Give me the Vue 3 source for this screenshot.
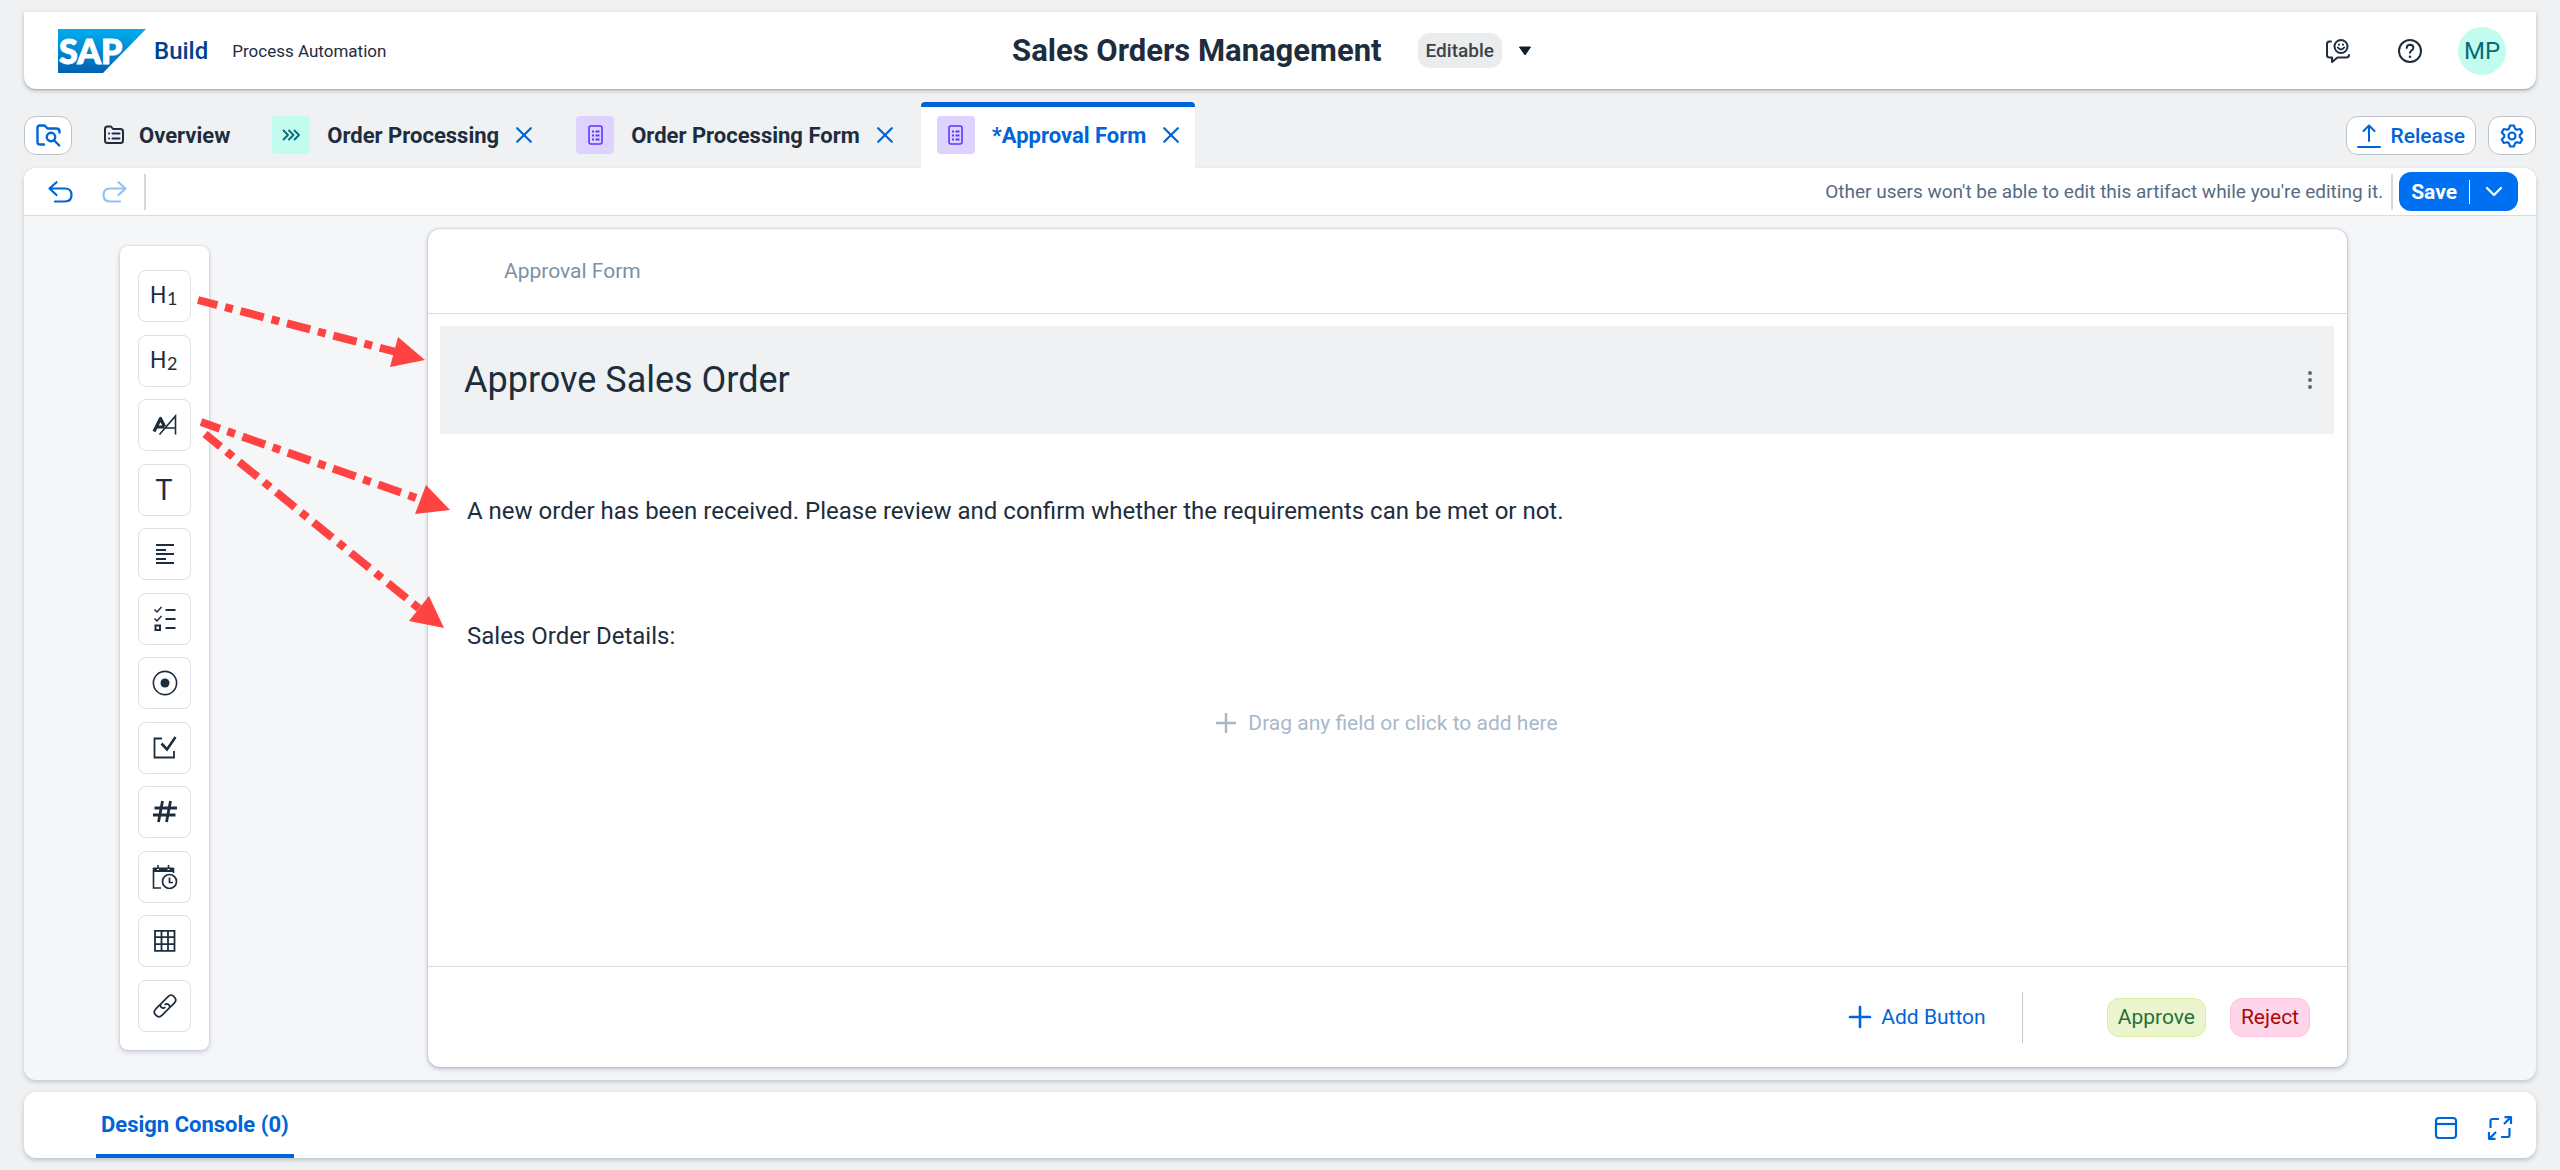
<script setup>
import { ref } from 'vue'

const tabs = [
  { label: 'Order Processing', kind: 'process', active: false },
  { label: 'Order Processing Form', kind: 'document', active: false },
  { label: '*Approval Form', kind: 'document', active: true },
]

const fields = [
  { id: 'h1', label: 'Heading 1' },
  { id: 'h2', label: 'Heading 2' },
  { id: 'paragraph', label: 'Paragraph' },
  { id: 'text', label: 'Text' },
  { id: 'textarea', label: 'Text area' },
  { id: 'checklist', label: 'Choice list' },
  { id: 'radio', label: 'Radio button' },
  { id: 'checkbox', label: 'Checkbox' },
  { id: 'number', label: 'Number' },
  { id: 'date', label: 'Date and time' },
  { id: 'table', label: 'Table' },
  { id: 'link', label: 'Link' },
]

const arrows = [
  { line: 'M198 300 L396 352', head: '425,360 398,337 390,367' },
  { line: 'M201 422 L422 500', head: '450,510 426,485 415,514' },
  { line: 'M205 434 L421 610', head: '444,628 429,596 409,621' },
]

const title = ref('Approve Sales Order')
</script>

<template>
  <div class="page">
    <header class="shell">
      <div class="brand">
        <svg class="logo" viewBox="0 0 88 44" role="img" aria-label="SAP">
          <defs>
            <linearGradient id="logoFill" x1="0" y1="0" x2="0" y2="1">
              <stop offset="0" stop-color="#00aeef" />
              <stop offset="1" stop-color="#0061b0" />
            </linearGradient>
          </defs>
          <polygon points="0,0 88,0 45,44 0,44" fill="url(#logoFill)" />
          <text x="1" y="35" class="logo-text">SAP</text>
        </svg>
        <span class="product">Build</span>
        <span class="area">Process Automation</span>
      </div>
      <div class="project">
        <h1>Sales Orders Management</h1>
        <span class="badge">Editable</span>
        <button class="plain" aria-label="Change version">
          <svg width="14" height="10" viewBox="0 0 14 10"><path d="M1.5 1h11L7 9z" fill="#131e29" stroke="#131e29" stroke-linejoin="round" /></svg>
        </button>
      </div>
      <div class="tools">
        <button class="plain" aria-label="Feedback">
          <svg width="24" height="24" viewBox="0 0 24 24" fill="none" stroke="#1d2d3e" stroke-width="2" stroke-linecap="round" stroke-linejoin="round">
            <path d="M5 2.5H3.500Q1 2.500 1 5v11q0 2.500 2.500 2.500H6V23l5.500-4.500H20q3 0 3-2.500" />
            <circle cx="15" cy="7.500" r="6.500" />
            <path d="M11.800 8.500q3.200 4 6.400 0" />
            <path d="M13 5.600v.1M17 5.600v.1" />
          </svg>
        </button>
        <button class="plain" aria-label="Help">
          <svg width="24" height="24" viewBox="0 0 24 24" fill="none" stroke="#1d2d3e" stroke-width="2" stroke-linecap="round">
            <circle cx="12" cy="12" r="11" />
            <path d="M8.700 9q.2-3.200 3.400-3.200 3.200.1 3.200 3 0 1.600-1.600 2.500-1.700.9-1.700 2.500" />
            <circle cx="12" cy="17.800" r=".6" fill="#1d2d3e" stroke-width="1.400" />
          </svg>
        </button>
        <button class="avatar" aria-label="User profile">MP</button>
      </div>
    </header>

    <nav class="tabs" aria-label="Open artifacts">
      <button class="outlined square" aria-label="Browse project">
        <svg width="25" height="23" viewBox="0 0 25 23" fill="none" stroke="#0064d9" stroke-width="2.400" stroke-linecap="round" stroke-linejoin="round">
          <path d="M8 20.500H4q-2.500 0-2.500-2.500V4Q1.500 1.500 4 1.500h4.500l3 3H20q3.500 0 3.500 3v1" />
          <circle cx="15" cy="13" r="4.200" />
          <path d="M18.200 16.500l5 5" />
        </svg>
      </button>
      <a class="tab overview" href="#overview">
        <svg width="20" height="20" viewBox="0 0 20 20" fill="none" stroke="#1d2d3e" stroke-width="2" stroke-linejoin="round" stroke-linecap="round">
          <path d="M1 4q0-2.500 2.500-2.500h3.500l2 2.500h7.500Q19 4 19 6.500v9q0 2.500-2.500 2.500h-13Q1 18 1 15.500z" />
          <path d="M5 8.500h.1M5 13.500h.1M8.500 8.500h7M8.500 13.500h7" />
        </svg>
        <span>Overview</span>
      </a>
      <div v-for="tab in tabs" :key="tab.label" class="tab" :class="{ active: tab.active }">
        <span class="tile" :class="tab.kind">
          <svg v-if="tab.kind === 'process'" width="18" height="12" viewBox="0 0 18 12" fill="none" stroke="#046c7a" stroke-width="1.800" stroke-linecap="round" stroke-linejoin="round">
            <path d="M1.500 1.500l4.500 4.500-4.500 4.500M7 1.500l4.500 4.500L7 10.500M12.500 1.500L17 6l-4.500 4.500" />
          </svg>
          <svg v-else width="15" height="20" viewBox="0 0 15 20" fill="none" stroke="#5d36ff">
            <rect x="1" y="1" width="13" height="18" rx="2" stroke-width="1.600" />
            <path d="M4 6.500h2M7.500 6.500h4M4 10.500h2M7.500 10.500h4M4 14.500h2M7.500 14.500h4" stroke-width="2" />
          </svg>
        </span>
        <a :href="'#' + tab.kind">{{ tab.label }}</a>
        <button class="plain" :aria-label="'Close ' + tab.label">
          <svg width="16" height="16" viewBox="0 0 16 16" fill="none" stroke="#0064d9" stroke-width="2.200" stroke-linecap="round"><path d="M1.200 1.200l13.600 13.600M14.800 1.200L1.200 14.800" /></svg>
        </button>
      </div>
      <div class="tab-actions">
        <button class="outlined release">
          <svg width="24" height="24" viewBox="0 0 24 24" fill="none" stroke="#0064d9" stroke-width="2" stroke-linecap="round" stroke-linejoin="round"><path d="M12 17V1.500M6.500 7L12 1.500 17.500 7M1 23h22" /></svg>
          <span>Release</span>
        </button>
        <button class="outlined square" aria-label="Settings">
          <svg width="24" height="24" viewBox="0 0 24 24" fill="none" stroke="#0064d9" stroke-width="2.200" stroke-linejoin="round">
            <path d="M10 1.500h4l1 3.300 1.800 1 3.400-.8 2 3.500-2.400 2.500v2l2.400 2.500-2 3.500-3.400-.8-1.800 1-1 3.300h-4l-1-3.300-1.800-1-3.400.8-2-3.500L4.200 13v-2L1.800 8.500l2-3.500 3.400.8 1.800-1z" />
            <circle cx="12" cy="12" r="3.500" />
          </svg>
        </button>
      </div>
    </nav>

    <main class="editor">
      <div class="toolbar">
        <button class="plain" aria-label="Undo">
          <svg width="25" height="22" viewBox="0 0 25 22" fill="none" stroke="#0064d9" stroke-width="2.200" stroke-linecap="round" stroke-linejoin="round"><path d="M8.500 1.200L1.500 7.500l7 6.500M1.500 7.500H17q6.500 0 6.500 6.500T17 20.500H7" /></svg>
        </button>
        <button class="plain faded" aria-label="Redo" disabled>
          <svg width="25" height="22" viewBox="0 0 25 22" fill="none" stroke="#0064d9" stroke-width="2.200" stroke-linecap="round" stroke-linejoin="round"><path d="M16.500 1.200l7 6.300-7 6.500M23.500 7.500H8q-6.500 0-6.500 6.500T8 20.500h10" /></svg>
        </button>
        <span class="divider"></span>
        <p class="lock-note">Other users won't be able to edit this artifact while you're editing it.</p>
        <span class="divider"></span>
        <div class="save">
          <button class="save-main">Save</button>
          <button class="save-more" aria-label="More save options">
            <svg width="18" height="12" viewBox="0 0 18 12" fill="none" stroke="#fff" stroke-width="2.200" stroke-linecap="round" stroke-linejoin="round"><path d="M2 2l7 7 7-7" /></svg>
          </button>
        </div>
      </div>

      <div class="workspace">
        <aside class="palette" aria-label="Form fields">
          <button v-for="field in fields" :key="field.id" class="field" :aria-label="field.label">
            <svg width="26" height="26" viewBox="0 0 26 26" fill="none" stroke="#1d2d3e" stroke-width="2">
              <template v-if="field.id === 'h1'">
                <text x="-2" y="20" class="glyph">H</text><text x="15" y="22" class="glyph small">1</text>
              </template>
              <template v-else-if="field.id === 'h2'">
                <text x="-2" y="20" class="glyph">H</text><text x="15" y="22" class="glyph small">2</text>
              </template>
              <template v-else-if="field.id === 'paragraph'">
                <path d="M2 19.500L8.500 6.500L12.500 14.500M4.500 15h8" stroke-width="3.200" stroke-linejoin="round" />
                <path d="M7.500 22.500L23.500 4V22.500M13.500 16h10" stroke-width="1.600" />
              </template>
              <template v-else-if="field.id === 'text'">
                <text x="12" y="23" class="glyph tall">T</text>
              </template>
              <path v-else-if="field.id === 'textarea'" d="M4 4h18M4 9h10M4 13h18M4 18h10M4 22h18" />
              <template v-else-if="field.id === 'checklist'">
                <path d="M2.500 3.500L5 6l4.500-5M2.500 12.500L5 15l4.500-5" stroke-width="1.500" />
                <rect x="3.500" y="19.500" width="4.500" height="4.500" />
                <path d="M13.500 4h10M13.500 13h10M13.500 22h10" />
              </template>
              <template v-else-if="field.id === 'radio'">
                <circle cx="13" cy="13" r="11.600" stroke-width="1.600" />
                <circle cx="13" cy="13" r="4.500" fill="#1d2d3e" stroke="none" />
              </template>
              <template v-else-if="field.id === 'checkbox'">
                <path d="M10 3.500H2.500v19H22V16" stroke-width="1.800" />
                <path d="M9.500 8.500l5.500 6L23.500 2" stroke-width="2.600" />
              </template>
              <path v-else-if="field.id === 'number'" d="M10.500 2L6.500 23M18.500 2l-4 21M2.500 9H25M1 16h22.500" stroke-width="2.800" />
              <template v-else-if="field.id === 'date'">
                <path d="M1.500 4v20H9M21.500 9V4" stroke-width="1.600" />
                <path d="M1 3.500h20.500v4.500H1z" fill="#1d2d3e" stroke="none" />
                <path d="M6 1v3M16.500 1v3" stroke-width="1.600" />
                <path d="M5 5.500h2M15.500 5.500h2" stroke="#fff" stroke-width="1.200" />
                <circle cx="17.500" cy="17.500" r="7" stroke-width="1.700" />
                <path d="M17.500 13.500v5h3.500" stroke-width="1.700" />
              </template>
              <path v-else-if="field.id === 'table'" d="M3 2.800h19.500v20H3zM9.500 3v20M16 3v20M3 9.200h19.500M3 16.200h19.500" stroke-width="1.800" />
              <g v-else stroke-width="1.700" transform="rotate(-45 13 13)">
                <path d="M9.500 11.500V11q0-2.500 2.500-2.500h9.500q4.500 0 4.500 4.500t-4.500 4.500H15.500" />
                <path d="M16.500 14.500v.5q0 2.500-2.500 2.500H4.500Q0 17.500 0 13t4.500-4.500H10.500" />
                <path d="M9.500 11q0 3 3 3M16.500 15q0-3-3-3" />
              </g>
            </svg>
          </button>
        </aside>

        <section class="form" aria-label="Form canvas">
          <div class="form-name">Approval Form</div>
          <div class="form-body">
            <div class="heading">
              <h2>{{ title }}</h2>
              <button class="plain" aria-label="Heading options">
                <svg width="6" height="20" viewBox="0 0 6 20" fill="#556b82"><circle cx="3" cy="3" r="2" /><circle cx="3" cy="10" r="2" /><circle cx="3" cy="17" r="2" /></svg>
              </button>
            </div>
            <p class="copy intro">A new order has been received. Please review and confirm whether the requirements can be met or not.</p>
            <p class="copy details">Sales Order Details:</p>
            <button class="plain drop">
              <svg width="20" height="20" viewBox="0 0 20 20" stroke="#a9b8c9" stroke-width="2.400"><path d="M10 0v20M0 10h20" /></svg>
              <span>Drag any field or click to add here</span>
            </button>
          </div>
          <footer class="form-footer">
            <button class="plain add">
              <svg width="22" height="22" viewBox="0 0 22 22" stroke="#0064d9" stroke-width="2.600" stroke-linecap="round"><path d="M11 1v20M1 11h20" /></svg>
              <span>Add Button</span>
            </button>
            <span class="rule"></span>
            <button class="decision approve">Approve</button>
            <button class="decision reject">Reject</button>
          </footer>
        </section>
      </div>
    </main>

    <section class="console" aria-label="Console">
      <a class="console-tab" href="#console">Design Console (0)</a>
      <div class="console-actions">
        <button class="plain" aria-label="Dock panel">
          <svg width="24" height="24" viewBox="0 0 24 24" fill="none" stroke="#0064d9" stroke-width="2.200"><rect x="2" y="2" width="20" height="20" rx="3" /><path d="M2 8h20" /></svg>
        </button>
        <button class="plain" aria-label="Full screen">
          <svg width="24" height="24" viewBox="0 0 24 24" fill="none" stroke="#0064d9" stroke-width="2.200" stroke-linejoin="round">
            <path d="M2.500 12V5q0-2 2-2H11M21.500 12v7q0 2-2 2H13M16 8l6.500-6.500M8 16l-6.500 6.500M16.500 1.200H23V8M7.500 22.800H1V16" />
          </svg>
        </button>
      </div>
    </section>

    <svg class="annotations" aria-hidden="true">
      <g v-for="arrow in arrows" :key="arrow.line">
        <path :d="arrow.line" />
        <polygon :points="arrow.head" />
      </g>
    </svg>
  </div>
</template>

<style>
body {
  background: #eff1f2;
}
</style>

<style scoped>
.page {
  position: relative;
  box-sizing: border-box;
  min-height: 100vh;
  padding: 12px 24px;
  display: flex;
  flex-direction: column;
  background: #eff1f2;
  color: #1d2d3e;
  font-family: Roboto, "Open Sans", sans-serif;
  font-size: 21px;
}
.page *,
.page *::before {
  box-sizing: border-box;
}
svg {
  display: block;
  flex: none;
  overflow: visible;
}
button {
  font: inherit;
  margin: 0;
  cursor: pointer;
}
a {
  color: inherit;
  text-decoration: none;
}
h1,
h2,
p {
  margin: 0;
  font-weight: 400;
}
.plain {
  padding: 0;
  border: 0;
  background: none;
  color: inherit;
  display: flex;
  align-items: center;
}

.shell {
  height: 77px;
  padding: 0 30px 0 34px;
  display: grid;
  grid-template-columns: 1fr auto 1fr;
  align-items: center;
  background: #fff;
  border-radius: 0 0 12px 12px;
  box-shadow: 0 2px 4px rgba(85, 107, 130, 0.35), 0 1px 1px rgba(85, 107, 130, 0.3);
}
.brand {
  display: flex;
  align-items: center;
}
.logo {
  width: 88px;
  height: 44px;
}
.logo-text {
  fill: #fff;
  stroke: #fff;
  stroke-width: 1px;
  font-family: "Liberation Sans Narrow", Lato, sans-serif;
  font-size: 34px;
  font-weight: 900;
}
.product {
  margin-left: 8px;
  color: #00418f;
  font-size: 24px;
  font-weight: 500;
}
.area {
  margin-left: 24px;
  font-size: 17px;
}
.project {
  display: flex;
  align-items: center;
  padding-right: 20px;
}
.project h1 {
  font-size: 31px;
  font-weight: 700;
}
.badge {
  margin: 0 16px 0 36px;
  padding: 0 8px;
  border-radius: 12px;
  background: #eaecee;
  color: #3f4347;
  font-size: 19px;
  font-weight: 500;
  line-height: 35px;
}
.tools {
  display: flex;
  justify-content: flex-end;
  align-items: center;
  gap: 48px;
}
.avatar {
  width: 48px;
  height: 48px;
  margin-left: -12px;
  padding: 0;
  border: 0;
  border-radius: 50%;
  background: #c2fcee;
  color: #046c7a;
  font-size: 24px;
}

.tabs {
  height: 79px;
  padding-top: 13px;
  display: flex;
  align-items: stretch;
}
.outlined {
  height: 39px;
  border: 1px solid #bcc3ca;
  border-radius: 12px;
  background: #fff;
  color: #0064d9;
  display: flex;
  align-items: center;
  justify-content: center;
}
.square {
  width: 48px;
  margin-top: 14px;
  padding: 0;
}
.tab {
  position: relative;
  margin-right: 12px;
  padding: 0 16px;
  display: flex;
  align-items: center;
  gap: 17px;
  font-size: 22px;
  font-weight: 700;
}
.overview {
  padding-left: 32px;
  padding-right: 14px;
  gap: 15px;
}
.tab.active {
  background: #fff;
  color: #0064d9;
  border-radius: 4px 4px 0 0;
}
.tab.active::before {
  content: "";
  position: absolute;
  inset: 0 0 auto;
  height: 5px;
  border-radius: 4px 4px 0 0;
  background: #0064d9;
}
.tile {
  flex: none;
  width: 38px;
  height: 38px;
  border-radius: 4px;
  display: flex;
  align-items: center;
  justify-content: center;
}
.tile.process {
  background: #c2fcee;
}
.tile.document {
  background: #ded3ff;
}
.tab-actions {
  margin-left: auto;
  display: flex;
  gap: 12px;
}
.release {
  margin-top: 14px;
  padding: 0 10px;
  gap: 10px;
  font-weight: 500;
}

.editor {
  flex: 1;
  display: flex;
  flex-direction: column;
  border-radius: 12px;
  background: #f5f6f8;
  box-shadow: 0 2px 4px rgba(85, 107, 130, 0.3);
}
.toolbar {
  height: 48px;
  padding: 0 18px 0 24px;
  display: flex;
  align-items: center;
  background: #fff;
  border-bottom: 1px solid #d9dbdd;
  border-radius: 12px 12px 0 0;
}
.toolbar .faded {
  margin: 0 17px 0 29px;
  opacity: 0.4;
}
.divider {
  width: 2px;
  height: 36px;
  background: #d5d7d9;
}
.lock-note {
  margin: 0 8px 0 auto;
  color: #556b82;
  font-size: 19px;
}
.save {
  height: 39px;
  margin-left: 6px;
  display: flex;
  align-items: center;
  border-radius: 12px;
  background: #0070f2;
}
.save button {
  height: 24px;
  border: 0;
  background: none;
  color: #fff;
  display: flex;
  align-items: center;
}
.save .save-main {
  padding: 0 12px;
  font-weight: 700;
  border-right: 1px solid #fff;
}
.save .save-more {
  padding: 0 15px;
}

.workspace {
  flex: 1;
  padding: 13px 189px 13px 96px;
  display: flex;
  gap: 219px;
}
.palette {
  width: 89px;
  margin: 17px 0;
  padding: 24px 18px 18px;
  display: flex;
  flex-direction: column;
  justify-content: space-between;
  gap: 12px;
  background: #fff;
  border-radius: 8px;
  box-shadow: 0 2px 5px rgba(85, 107, 130, 0.3), 0 0 2px rgba(85, 107, 130, 0.25);
}
.field {
  width: 53px;
  height: 52px;
  padding: 0;
  border: 1px solid #dcdfe4;
  border-radius: 8px;
  background: #fff;
  display: flex;
  align-items: center;
  justify-content: center;
}
.glyph {
  fill: #1d2d3e;
  stroke: none;
  font-size: 23px;
}
.glyph.small {
  font-family: Lato, sans-serif;
  font-size: 18px;
}
.glyph.tall {
  font-size: 29px;
  text-anchor: middle;
}

.form {
  flex: 1;
  display: flex;
  flex-direction: column;
  background: #fff;
  border-radius: 12px;
  box-shadow: 0 2px 5px rgba(85, 107, 130, 0.35), 0 0 2px rgba(85, 107, 130, 0.5);
}
.form-name {
  padding: 0 76px;
  border-bottom: 1px solid #d9dce0;
  color: #7b91a8;
  line-height: 84px;
}
.form-body {
  flex: 1;
  padding: 12px 13px 12px 12px;
  display: flex;
  flex-direction: column;
}
.heading {
  height: 108px;
  padding: 0 21px 0 24px;
  display: flex;
  align-items: center;
  justify-content: space-between;
  background: #eff1f2;
}
.heading h2 {
  font-size: 36px;
}
.copy {
  padding-left: 27px;
  font-size: 24px;
  line-height: 36px;
}
.intro {
  margin-top: 59px;
}
.details {
  margin-top: 89px;
}
.drop {
  margin-top: 53px;
  align-self: center;
  gap: 12px;
  color: #a9b8c9;
  line-height: 32px;
}
.form-footer {
  height: 101px;
  padding-right: 37px;
  border-top: 1px solid #d9dce0;
  display: flex;
  align-items: center;
  justify-content: flex-end;
}
.add {
  gap: 10px;
  color: #0064d9;
}
.rule {
  width: 1px;
  height: 51px;
  margin: 0 84px 0 36px;
  background: #c4c9ce;
}
.decision {
  height: 39px;
  padding: 0 10px;
  border: 1px solid;
  border-radius: 12px;
}
.approve {
  border-color: #dceba0;
  background: #eaf5ce;
  color: #256f3a;
}
.reject {
  margin-left: 24px;
  border-color: #ffc3e0;
  background: #ffd5ea;
  color: #aa0808;
}

.console {
  height: 66px;
  margin-top: 12px;
  padding: 0 24px 0 72px;
  display: flex;
  align-items: stretch;
  justify-content: space-between;
  background: #fff;
  border-radius: 12px;
  box-shadow: 0 2px 4px rgba(85, 107, 130, 0.35);
}
.console-tab {
  padding: 0 5px;
  border-bottom: 4px solid #0064d9;
  border-radius: 2px 2px 0 0;
  color: #0064d9;
  font-size: 22px;
  font-weight: 700;
  line-height: 66px;
}
.console-actions {
  padding-top: 6px;
  display: flex;
  align-items: center;
  gap: 30px;
}

.annotations {
  position: absolute;
  left: 0;
  top: 0;
  width: 460px;
  height: 640px;
  pointer-events: none;
}
.annotations path {
  fill: none;
  stroke: #ff4242;
  stroke-width: 8px;
  stroke-dasharray: 24 8 8 8;
  stroke-dashoffset: 4px;
}
.annotations polygon {
  fill: #ff4242;
}
</style>
